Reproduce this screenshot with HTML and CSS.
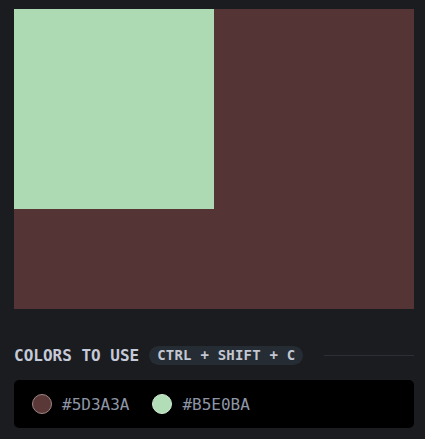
FILE: index.html
```html
<!DOCTYPE html>
<html>
<head>
<meta charset="utf-8">
<link rel="stylesheet" href="styles.css">
</head>
<body>
<main class="page">
  <div class="canvas">
    <div class="square"></div>
  </div>
  <div class="header">
    <span class="title">COLORS TO USE</span>
    <span class="kbd">CTRL + SHIFT + C</span>
    <span class="rule"></span>
  </div>
  <div class="palette">
    <div class="swatch"><span class="dot dot-brown"></span><span class="hex">#5D3A3A</span></div>
    <div class="swatch"><span class="dot dot-green"></span><span class="hex">#B5E0BA</span></div>
  </div>
</main>
</body>
</html>
```
FILE: styles.css
```css
html, body {
  margin: 0;
  padding: 0;
  background: #1a1c20;
}
.page {
  padding: 9px 11px 0 14px;
  font-family: "DejaVu Sans Mono", "Liberation Mono", monospace;
}
.canvas {
  width: 400px;
  height: 300px;
  background: #543434;
}
.square {
  width: 200px;
  height: 200px;
  background: #aedab3;
}
.header {
  display: flex;
  align-items: center;
  margin-top: 37px;
  height: 19px;
}
.title {
  font-size: 16px;
  font-weight: bold;
  color: #c6cad8;
  line-height: 19px;
}
.kbd {
  margin-left: 10px;
  background: #262c34;
  color: #c2c7d2;
  font-size: 14px;
  font-weight: bold;
  line-height: 19px;
  padding: 0 8px;
  border-radius: 10px;
  letter-spacing: 0.2px;
}
.rule {
  flex: 1;
  height: 1px;
  background: #2c3036;
  margin-left: 21px;
}
.palette {
  margin-top: 15px;
  width: 400px;
  height: 48px;
  background: #000;
  border-radius: 5px;
  display: flex;
  align-items: center;
  padding-left: 18px;
  box-sizing: border-box;
  gap: 23px;
}
.swatch {
  display: flex;
  align-items: center;
  gap: 10px;
}
.dot {
  width: 20px;
  height: 20px;
  border-radius: 50%;
  box-sizing: border-box;
}
.dot-brown {
  background: #5a3838;
  border: 1px solid #a08585;
}
.dot-green {
  background: #b2deb7;
  border: 1px solid #cfe9d2;
}
.hex {
  font-size: 16px;
  color: #8e96a6;
}
```
